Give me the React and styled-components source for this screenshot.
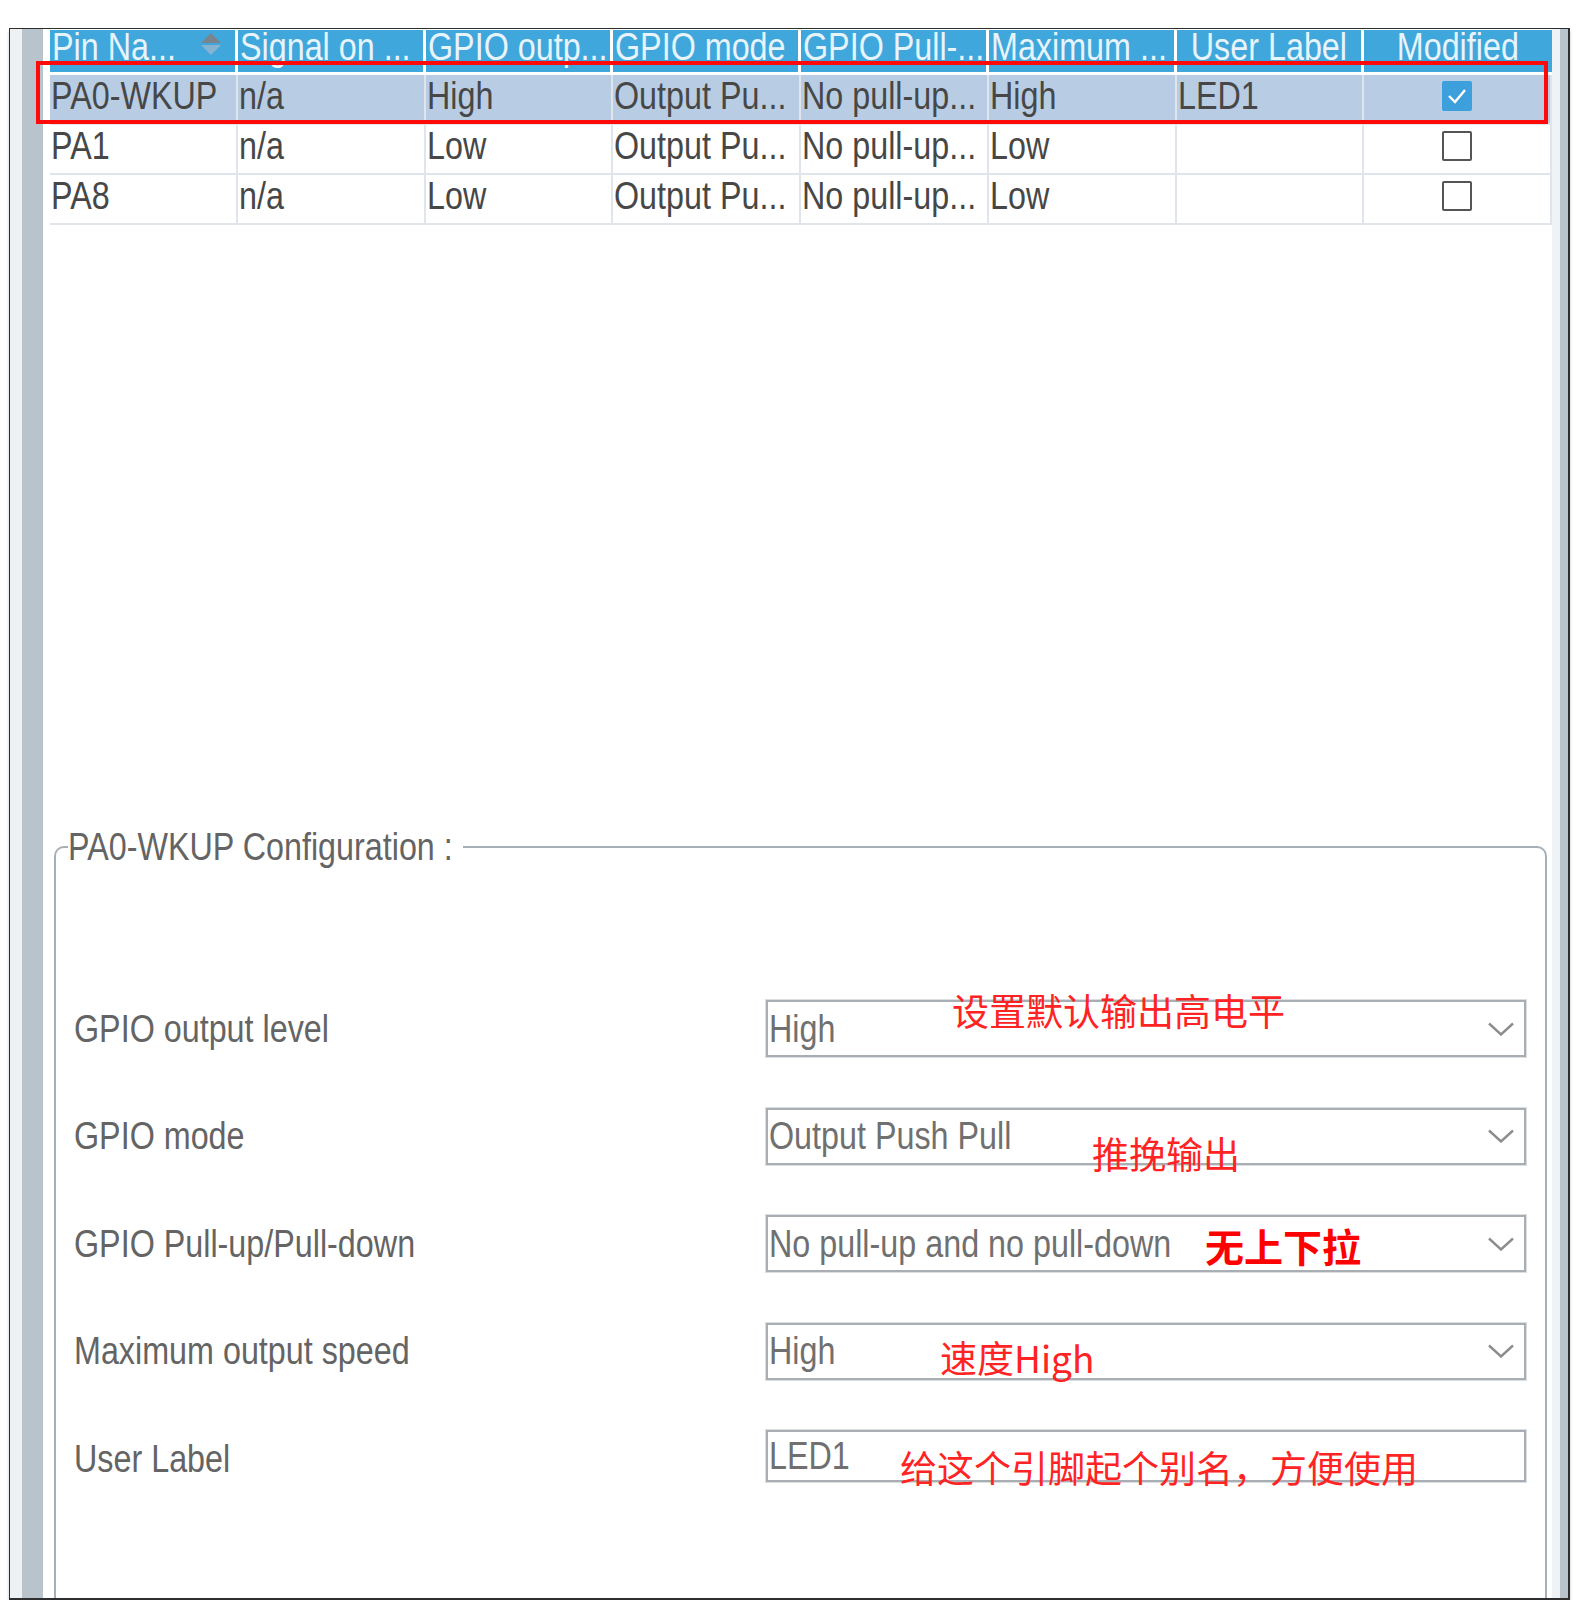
import React from "react";
import styled, { createGlobalStyle } from "styled-components";

const GlobalStyle = createGlobalStyle`
  html, body {
    margin: 0;
    padding: 0;
    background: #ffffff;
  }
  body {
    font-family: "Liberation Sans", Arial, sans-serif;
  }
`;

const Frame = styled.div`
  box-sizing: border-box;
  width: 1561px;
  height: 1572px;
  margin: 28px 0 0 9px;
  display: flex;
  position: relative;
  background: #ffffff;
  border-style: solid;
  border-color: #2e2e2e;
  border-width: 1px 2px 2px 1px;
  box-shadow: 0 3px 3px rgba(0, 0, 0, 0.22);
`;

const Rail = styled.div`
  flex-shrink: 0;
  width: ${({ $w }) => $w}px;
  background: ${({ $bg }) => $bg};
`;

const Main = styled.div`
  flex: 1;
  min-width: 0;
  display: flex;
  flex-direction: column;
  padding: 1px 0 0 7px;
`;

// text of the CubeMX window is narrow and tall in the picture
const Txt = styled.span`
  display: inline-block;
  flex-shrink: 0;
  font-size: 38px;
  line-height: 38px;
  white-space: nowrap;
  transform: scaleX(0.85);
  transform-origin: ${({ $center }) => ($center ? "center" : "left")} center;
`;

const Table = styled.div`
  position: relative;
  display: grid;
  grid-template-columns: repeat(8, minmax(0, 1fr));
  grid-template-rows: 45px repeat(3, 50px);
`;

const HeadCell = styled.div`
  box-sizing: border-box;
  min-width: 0;
  display: flex;
  align-items: flex-start;
  justify-content: ${({ $center }) => ($center ? "center" : "flex-start")};
  padding: 0 2px;
  background: #3fa7db;
  color: #e8f4fb;
  border-bottom: 3px solid #ffffff;
  border-right: ${({ $last }) => ($last ? "none" : "3px solid #ffffff")};

  & > span {
    margin-top: -2px;
  }
`;

const SortIcon = styled.svg`
  flex-shrink: 0;
  margin: 3px 12px 0 auto;
`;

const Cell = styled.div`
  box-sizing: border-box;
  min-width: 0;
  display: flex;
  align-items: center;
  justify-content: ${({ $center }) => ($center ? "center" : "flex-start")};
  padding: 0 1px 6px;
  color: #474747;
  background: ${({ $selected }) => ($selected ? "#b8cde3" : "#ffffff")};
  border-bottom: 2px solid #dfe5ea;
  border-right: 2px solid #dfe5ea;
`;

const Check = styled.span`
  box-sizing: border-box;
  width: 30px;
  height: 30px;
  display: flex;
  align-items: center;
  justify-content: center;
  border-radius: 2px;
  border: 2px solid ${({ $on }) => ($on ? "#3d9fdb" : "#555555")};
  background: ${({ $on }) => ($on ? "#3d9fdb" : "#ffffff")};
`;

const Highlight = styled.div`
  position: absolute;
  left: -14px;
  right: 4px;
  top: 31px;
  height: 63px;
  box-sizing: border-box;
  border: 4px solid #ff0a0a;
  pointer-events: none;
`;

const Group = styled.fieldset`
  flex: 1;
  min-width: 0;
  margin: 603px 5px 0 4px;
  padding: 134px 19px 0 18px;
  border: 2px solid #a6afb6;
  border-bottom: none;
  border-radius: 10px 10px 0 0;
`;

const Legend = styled.legend`
  width: 395px;
  height: 38px;
  padding: 0;
  margin-left: -6px;
  color: #646464;
`;

const Form = styled.div`
  display: grid;
  grid-template-columns: 692px 1fr;
  grid-auto-rows: 57px;
  row-gap: 50.5px;
  align-items: center;
`;

const Label = styled.div`
  color: #646464;
`;

const Field = styled.div`
  position: relative;
  box-sizing: border-box;
  align-self: start;
  height: ${({ $h }) => $h}px;
  display: flex;
  align-items: center;
  padding: 0 1px;
  background: #ffffff;
  color: #707070;
  border: 2px solid #a8aeb3;
  box-shadow: 0 0 0 1px #dadee1;
`;

const ChevronSvg = styled.svg`
  flex-shrink: 0;
  margin: 0 9px 0 auto;
`;

const Note = styled.span`
  position: absolute;
  left: ${({ $x }) => $x}px;
  top: ${({ $y }) => $y}px;
  font-family: "Noto Sans CJK SC", "Liberation Sans", sans-serif;
  font-size: ${({ $bold }) => ($bold ? 39 : 37)}px;
  font-weight: ${({ $bold }) => ($bold ? 700 : 400)};
  line-height: 1;
  white-space: nowrap;
  color: ${({ $bold }) => ($bold ? "#ff0000" : "#ff2323")};
`;

const columns = [
  { title: "Pin Na...", sort: true },
  { title: "Signal on ..." },
  { title: "GPIO outp..." },
  { title: "GPIO mode" },
  { title: "GPIO Pull-..." },
  { title: "Maximum ..." },
  { title: "User Label", center: true },
  { title: "Modified", center: true },
];

const pins = [
  ["PA0-WKUP", "n/a", "High", "Output Pu...", "No pull-up...", "High", "LED1", true],
  ["PA1", "n/a", "Low", "Output Pu...", "No pull-up...", "Low", "", false],
  ["PA8", "n/a", "Low", "Output Pu...", "No pull-up...", "Low", "", false],
];

const fields = [
  { label: "GPIO output level", value: "High", select: true, note: "设置默认输出高电平", x: 184, y: -10 },
  { label: "GPIO mode", value: "Output Push Pull", select: true, note: "推挽输出", x: 324, y: 25 },
  { label: "GPIO Pull-up/Pull-down", value: "No pull-up and no pull-down", select: true, note: "无上下拉", x: 437, y: 9, bold: true },
  { label: "Maximum output speed", value: "High", select: true, note: "速度High", x: 172, y: 14 },
  { label: "User Label", value: "LED1", select: false, note: "给这个引脚起个别名，方便使用", x: 132, y: 17 },
];

const Chevron = () => (
  <ChevronSvg width="26" height="14" viewBox="0 0 26 14">
    <polyline points="1,1.5 13,12.5 25,1.5" fill="none" stroke="#8c8c8c" strokeWidth="2.4" />
  </ChevronSvg>
);

const CheckMark = () => (
  <svg width="22" height="18" viewBox="0 0 22 18">
    <polyline points="3,9 9,15 19,3" fill="none" stroke="#ffffff" strokeWidth="2.4" />
  </svg>
);

const App = () => {
  return (
    <>
      <GlobalStyle />
      <Frame>
        <Rail $w={12} $bg="#eef1f3" />
        <Rail $w={21} $bg="#b8c3cb" />
        <Main>
          <Table>
            {columns.map((col, i) => (
              <HeadCell key={col.title} $center={col.center} $last={i === columns.length - 1}>
                <Txt $center={col.center}>{col.title}</Txt>
                {col.sort && (
                  <SortIcon width="20" height="22" viewBox="0 0 20 22">
                    <polygon points="10,0 20,10 0,10" fill="#7a848c" />
                    <polygon points="0,12 20,12 10,22" fill="#86b3d1" />
                  </SortIcon>
                )}
              </HeadCell>
            ))}
            {pins.map((row, r) =>
              row.map((value, c) =>
                c === 7 ? (
                  <Cell key={`${r}-${c}`} $center $selected={r === 0}>
                    <Check $on={value}>{value && <CheckMark />}</Check>
                  </Cell>
                ) : (
                  <Cell key={`${r}-${c}`} $selected={r === 0}>
                    <Txt>{value}</Txt>
                  </Cell>
                )
              )
            )}
            <Highlight />
          </Table>

          <Group>
            <Legend>
              <Txt>PA0-WKUP Configuration :</Txt>
            </Legend>
            <Form>
              {fields.map((f) => (
                <React.Fragment key={f.label}>
                  <Label>
                    <Txt>{f.label}</Txt>
                  </Label>
                  <Field $h={f.select ? 57 : 52}>
                    <Txt>{f.value}</Txt>
                    {f.select && <Chevron />}
                    <Note $x={f.x} $y={f.y} $bold={f.bold}>
                      {f.note}
                    </Note>
                  </Field>
                </React.Fragment>
              ))}
            </Form>
          </Group>
        </Main>
        <Rail $w={8} $bg="#f0f3f5" />
        <Rail $w={8} $bg="#b8c3cb" />
      </Frame>
    </>
  );
};

export default App;
